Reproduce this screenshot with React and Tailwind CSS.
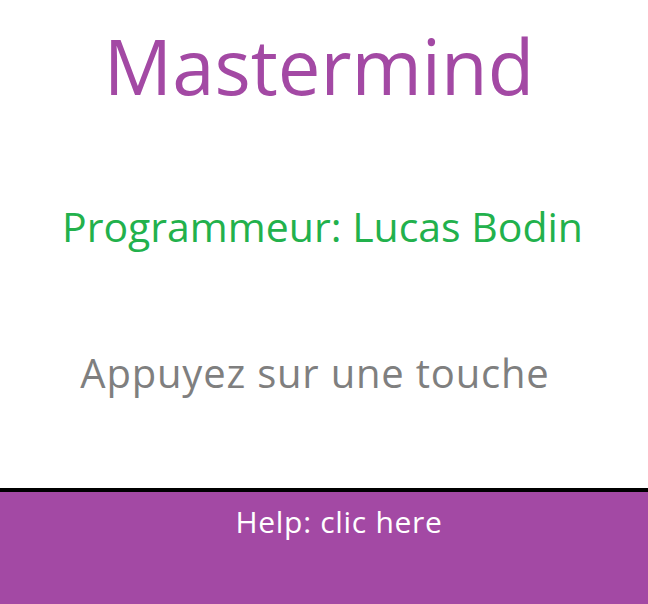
export default function App() {
  return (
    <div className="w-[648px] h-[604px] flex flex-col bg-white overflow-hidden">
      <div className="flex-1 flex flex-col">
        <div className="pt-[16px] pr-[10px] text-center text-[76px] leading-[100px] text-[#a349a4]" style={{ fontFamily: '"Open Sans", sans-serif' }}>
          Mastermind
        </div>
        <div className="mt-[85px] pr-[3px] text-center text-[41px] leading-[50px] text-[#22b14c]" style={{ fontFamily: '"Open Sans", sans-serif' }}>
          Programmeur: Lucas Bodin
        </div>
        <div className="mt-[97px] pr-[18px] text-center text-[40px] tracking-[0.8px] leading-[50px] text-[#7f7f7f]" style={{ fontFamily: '"Open Sans", sans-serif' }}>
          Appuyez sur une touche
        </div>
      </div>
      <div className="h-[4px] bg-black" />
      <div className="h-[112px] bg-[#a349a4] flex flex-col items-center">
        <div className="mt-[10px] pl-[30px] text-[30px] tracking-[0.7px] leading-[40px] text-white" style={{ fontFamily: '"Open Sans", sans-serif' }}>
          Help: clic here
        </div>
      </div>
    </div>
  );
}
